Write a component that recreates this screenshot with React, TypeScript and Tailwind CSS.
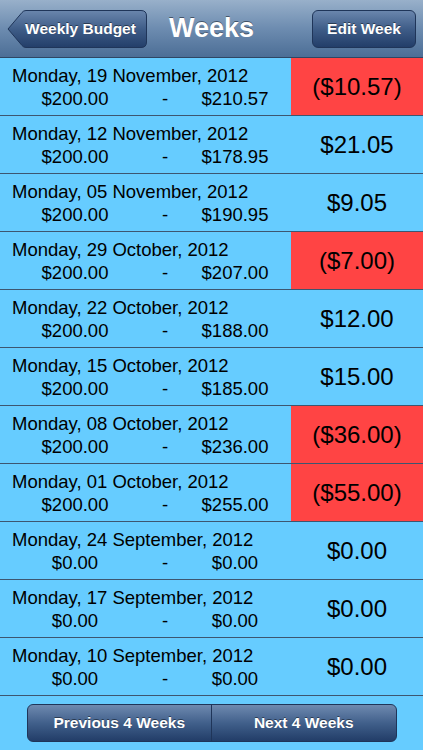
import React from 'react'

type Week = {
  date: string
  budget: string
  spent: string
  diff: string
  over?: boolean
}

const weeks: Week[] = [
  { date: 'Monday, 19 November, 2012', budget: '$200.00', spent: '$210.57', diff: '($10.57)', over: true },
  { date: 'Monday, 12 November, 2012', budget: '$200.00', spent: '$178.95', diff: '$21.05' },
  { date: 'Monday, 05 November, 2012', budget: '$200.00', spent: '$190.95', diff: '$9.05' },
  { date: 'Monday, 29 October, 2012', budget: '$200.00', spent: '$207.00', diff: '($7.00)', over: true },
  { date: 'Monday, 22 October, 2012', budget: '$200.00', spent: '$188.00', diff: '$12.00' },
  { date: 'Monday, 15 October, 2012', budget: '$200.00', spent: '$185.00', diff: '$15.00' },
  { date: 'Monday, 08 October, 2012', budget: '$200.00', spent: '$236.00', diff: '($36.00)', over: true },
  { date: 'Monday, 01 October, 2012', budget: '$200.00', spent: '$255.00', diff: '($55.00)', over: true },
  { date: 'Monday, 24 September, 2012', budget: '$0.00', spent: '$0.00', diff: '$0.00' },
  { date: 'Monday, 17 September, 2012', budget: '$0.00', spent: '$0.00', diff: '$0.00' },
  { date: 'Monday, 10 September, 2012', budget: '$0.00', spent: '$0.00', diff: '$0.00' },
]

const font = { fontFamily: '"Liberation Sans", Arial, sans-serif' }

function BackButton() {
  return (
    <div className="relative h-[38px] w-[140px]">
      <svg className="absolute inset-0" width="140" height="38" viewBox="0 0 140 38">
        <defs>
          <linearGradient id="btnGrad" x1="0" y1="0" x2="0" y2="1">
            <stop offset="0" stopColor="#6a86ad" />
            <stop offset="0.5" stopColor="#3f5d88" />
            <stop offset="1" stopColor="#233e69" />
          </linearGradient>
        </defs>
        <path
          d="M1 19 L15 2.5 Q16.5 0.5 19 0.5 L134 0.5 Q139.5 0.5 139.5 6 L139.5 32 Q139.5 37.5 134 37.5 L19 37.5 Q16.5 37.5 15 35.5 Z"
          fill="url(#btnGrad)"
          stroke="#1f3559"
          strokeWidth="1"
        />
      </svg>
      <span className="absolute inset-0 flex items-center justify-center pl-[7px] text-[15.5px] font-bold text-white [text-shadow:0_-1px_0_rgba(0,0,0,0.45)]">
        Weekly Budget
      </span>
    </div>
  )
}

function WeekRow({ week }: { week: Week }) {
  return (
    <div className="flex h-[58px] border-b border-[#3d5670] bg-[#66ccff] text-black">
      <div className="w-[291px] shrink-0 pt-[7px]">
        <div className="pl-[12px] text-[18.5px] leading-[22px] whitespace-nowrap">{week.date}</div>
        <div className="flex text-[18.5px] leading-[22px] mt-[1px]">
          <span className="ml-[20px] w-[110px] text-center">{week.budget}</span>
          <span className="w-[70px] text-center">-</span>
          <span className="w-[70px] text-center whitespace-nowrap">{week.spent}</span>
        </div>
      </div>
      <div
        className={
          'flex flex-1 items-center justify-center text-[24px] ' + (week.over ? 'bg-[#ff4444]' : '')
        }
      >
        {week.diff}
      </div>
    </div>
  )
}

export default function App() {
  return (
    <div className="flex h-[750px] w-[423px] flex-col overflow-hidden bg-[#66ccff]" style={font}>
      <div className="grid h-[58px] shrink-0 grid-cols-[1fr_auto_1fr] items-center border-b border-[#2e4664] bg-gradient-to-b from-[#98b0ca] via-[#6d8cb0] to-[#4c6e96] px-[7px]">
        <div className="flex justify-start">
          <BackButton />
        </div>
        <div className="text-[27px] font-bold text-white [text-shadow:0_-1px_0_rgba(0,0,0,0.45)]">
          Weeks
        </div>
        <div className="flex justify-end">
          <div className="flex h-[38px] w-[104px] items-center justify-center rounded-[6px] border border-[#1f3559] bg-gradient-to-b from-[#6a86ad] via-[#3f5d88] to-[#233e69] text-[15.5px] font-bold text-white [text-shadow:0_-1px_0_rgba(0,0,0,0.45)]">
            Edit Week
          </div>
        </div>
      </div>
      {weeks.map((w) => (
        <WeekRow key={w.date} week={w} />
      ))}
      <div className="flex flex-1 items-start justify-center pt-[8px]">
        <div className="flex h-[38px] w-[370px] overflow-hidden rounded-[6px] border border-[#1f3559] bg-gradient-to-b from-[#6f8ab0] via-[#41608b] to-[#223d68] text-[15.5px] font-bold text-white [text-shadow:0_-1px_0_rgba(0,0,0,0.45)]">
          <div className="flex flex-1 items-center justify-center border-r border-[#1f3559]">Previous 4 Weeks</div>
          <div className="flex flex-1 items-center justify-center">Next 4 Weeks</div>
        </div>
      </div>
    </div>
  )
}
